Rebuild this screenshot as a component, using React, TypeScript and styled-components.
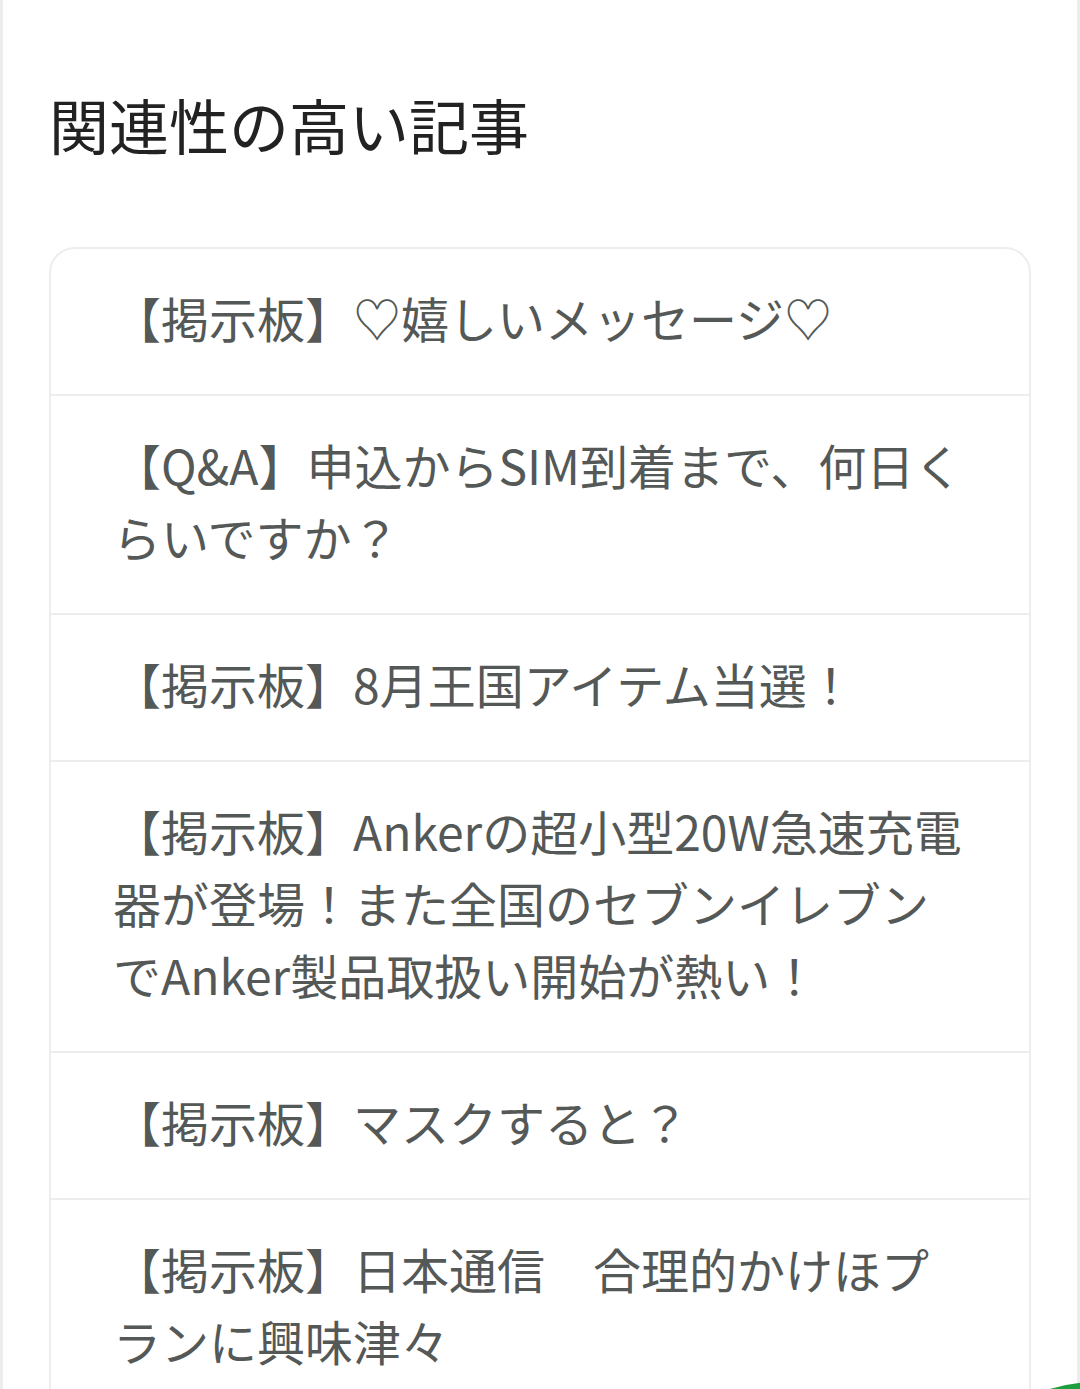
import React from 'react';
import styled, { createGlobalStyle } from 'styled-components';

const GlobalStyle = createGlobalStyle`
  html, body {
    margin: 0;
    padding: 0;
    background: #ffffff;
  }
  body {
    font-family: "Noto Sans CJK JP", sans-serif;
    overflow: hidden;
  }
`;

const Page = styled.div`
  min-height: 1389px;
  box-sizing: border-box;
  border-left: 3px solid #eceeee;
  border-right: 3px solid #eceeee;
  padding: 79px 46px 0;
`;

const Title = styled.h2`
  margin: 0 0 78px;
  font-size: 60px;
  line-height: 90px;
  font-weight: 400;
  color: #222222;
`;

const List = styled.ul`
  list-style: none;
  margin: 0;
  padding: 0;
  border: 2px solid #eceeee;
  border-radius: 26px;
  overflow: hidden;
`;

const Item = styled.li`
  padding: 32px 62px 41px;
  font-size: 48px;
  line-height: 72px;
  color: #545857;
  border-top: 2px solid #eceeee;

  &:first-child {
    border-top: none;
  }
`;

const Fab = styled.div`
  position: fixed;
  left: 945px;
  top: 1382px;
  width: 300px;
  height: 300px;
  border-radius: 50%;
  background: #1d9f3d;
`;

const articles = [
  '【掲示板】♡嬉しいメッセージ♡',
  '【Q&A】申込からSIM到着まで、何日くらいですか？',
  '【掲示板】8月王国アイテム当選！',
  '【掲示板】Ankerの超小型20W急速充電器が登場！また全国のセブンイレブンでAnker製品取扱い開始が熱い！',
  '【掲示板】マスクすると？',
  '【掲示板】日本通信　合理的かけほプランに興味津々',
];

const App = () => (
  <>
    <GlobalStyle />
    <Page>
      <Title>関連性の高い記事</Title>
      <List>
        {articles.map((a) => (
          <Item key={a}>{a}</Item>
        ))}
      </List>
    </Page>
    <Fab />
  </>
);

export default App;
